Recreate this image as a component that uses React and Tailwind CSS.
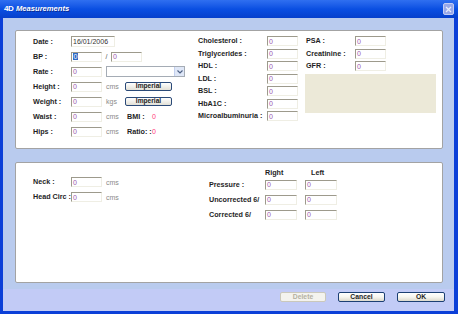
import React from "react";

// small XP-style form bits

function Box({ w = 31, h = 10, children, dark }) {
  return (
    <div
      className={`flex items-center bg-white border border-t-[#9d9a8c] border-l-[#9d9a8c] border-r-[#efeee4] border-b-[#efeee4] pl-[1px] text-[7px] leading-none overflow-hidden ${dark ? "text-[#333]" : "text-[#9a5ab0]"}`}
      style={{ width: w, height: h }}
    >
      {children ?? "0"}
    </div>
  );
}

function Lbl({ w, children, className = "" }) {
  return (
    <span
      className={`shrink-0 font-bold text-[7.2px] leading-none text-[#1e1e1e] whitespace-nowrap ${className}`}
      style={{ width: w }}
    >
      {children}
    </span>
  );
}

function Unit({ w, children }) {
  return (
    <span className="shrink-0 pl-[4px] text-[7px] leading-none text-[#8a8a8a]" style={{ width: w }}>
      {children}
    </span>
  );
}

function XpButton({ label, disabled, w }) {
  return (
    <div
      className={`h-[10px] flex items-center justify-center rounded-[2px] border text-[6.8px] font-bold leading-none ${
        disabled
          ? "border-[#cac8bb] bg-[#f4f3ee] text-[#b4b1a2]"
          : "border-[#1c3f73] bg-linear-to-b from-white via-[#f6f5f0] to-[#dcd9cc] text-[#1e1e1e]"
      }`}
      style={{ width: w }}
    >
      {label}
    </div>
  );
}

export default function App() {
  const labs = ["Cholesterol :", "Triglycerides :", "HDL :", "LDL :", "BSL :", "HbA1C :", "Microalbuminuria :"];

  return (
    <div className="w-[458px] h-[314px] flex flex-col overflow-hidden font-['Liberation_Sans',Arial,sans-serif] select-none">
      {/* title bar */}
      <div className="h-[18px] shrink-0 flex items-center bg-linear-to-b from-[#2f6ff0] via-[#0a4fe2] to-[#0640cc]">
        <span className="ml-[4px] w-[12px] text-[8px] font-bold leading-none text-white tracking-[-0.5px]">4D</span>
        <span className="text-[7.6px] font-bold italic leading-none text-white [text-shadow:1px_1px_0_#0a2a90]">Measurements</span>
        <div className="ml-auto mr-[4px] w-[11px] h-[12px] flex items-center justify-center rounded-[2px] border border-[#c4cdf3] bg-[#97a8e9]">
          <svg width="7" height="7" viewBox="0 0 7 7">
            <path d="M1 1L6 6M6 1L1 6" stroke="#e8ecfb" strokeWidth="1.3" />
          </svg>
        </div>
      </div>

      {/* window body */}
      <div className="flex-1 flex flex-col bg-[#b9cbee] border-l-[3px] border-r-[4px] border-b-[3px] border-[#0b3fd8]">
        <div className="pl-[12px] pt-[12px]">
          {/* top panel */}
          <div className="w-[428px] h-[119px] bg-white border border-[#a3a3a3] rounded-[2px] flex pt-[3px] pl-[17px]">
            {/* left column */}
            <div className="w-[165px] flex flex-col">
              <div className="h-[15px] flex items-center">
                <Lbl w={38}>Date :</Lbl>
                <Box w={44} h={11} dark>16/01/2006</Box>
              </div>
              <div className="h-[15px] flex items-center">
                <Lbl w={38}>BP :</Lbl>
                <Box>
                  <span className="bg-[#316ac5] text-white px-[0.5px]">0</span>
                </Box>
                <span className="w-[9px] text-center text-[7px] text-[#555] leading-none">/</span>
                <Box />
              </div>
              <div className="h-[15px] flex items-center">
                <Lbl w={38}>Rate :</Lbl>
                <Box />
                <div className="ml-[4px] w-[79px] h-[11px] flex justify-end bg-white border border-[#a5acb5]">
                  <div className="w-[10px] h-full flex items-center justify-center bg-[#dfe7f7] border-l border-[#c3d0ee]">
                    <svg width="6" height="4" viewBox="0 0 6 4">
                      <path d="M0.5 0.5L3 3L5.5 0.5" stroke="#4d6185" strokeWidth="1.2" fill="none" />
                    </svg>
                  </div>
                </div>
              </div>
              <div className="h-[15px] flex items-center">
                <Lbl w={38}>Height :</Lbl>
                <Box />
                <Unit w={23}>cms</Unit>
                <div className="w-[47px] h-[9px] flex items-center justify-center rounded-[2px] border border-[#2b4a78] bg-linear-to-b from-white to-[#e2e0d6] text-[6.6px] font-bold leading-none text-[#222]">
                  Imperial
                </div>
              </div>
              <div className="h-[15px] flex items-center">
                <Lbl w={38}>Weight :</Lbl>
                <Box />
                <Unit w={23}>kgs</Unit>
                <div className="w-[47px] h-[9px] flex items-center justify-center rounded-[2px] border border-[#2b4a78] bg-linear-to-b from-white to-[#e2e0d6] text-[6.6px] font-bold leading-none text-[#222]">
                  Imperial
                </div>
              </div>
              <div className="h-[15px] flex items-center">
                <Lbl w={38}>Waist :</Lbl>
                <Box />
                <Unit w={25}>cms</Unit>
                <Lbl w={25}>BMI :</Lbl>
                <span className="text-[7px] leading-none text-[#ff3b7a]">0</span>
              </div>
              <div className="h-[15px] flex items-center">
                <Lbl w={38}>Hips :</Lbl>
                <Box />
                <Unit w={25}>cms</Unit>
                <Lbl w={25}>Ratio: :</Lbl>
                <span className="text-[7px] leading-none text-[#ff3b7a]">0</span>
              </div>
            </div>

            {/* middle column */}
            <div className="w-[107px] flex flex-col mt-[0.75px]">
              {labs.map((l) => (
                <div key={l} className="h-[12.5px] flex items-center">
                  <Lbl w={69}>{l}</Lbl>
                  <Box />
                </div>
              ))}
            </div>

            {/* right column */}
            <div className="flex flex-col mt-[0.75px]">
              {["PSA :", "Creatinine :", "GFR :"].map((l) => (
                <div key={l} className="h-[12.5px] flex items-center">
                  <Lbl w={50} className="pl-[1px]">{l}</Lbl>
                  <Box />
                </div>
              ))}
              <div className="mt-[1.5px] w-[131px] h-[39px] bg-[#ece9d8]" />
            </div>
          </div>

          {/* bottom panel */}
          <div className="mt-[13px] w-[428px] h-[121px] bg-white border border-[#a3a3a3] rounded-[2px] flex items-start pl-[17px]">
            <div className="w-[176px] flex flex-col mt-[11.5px]">
              <div className="h-[15px] flex items-center">
                <Lbl w={38}>Neck :</Lbl>
                <Box />
                <Unit w={25}>cms</Unit>
              </div>
              <div className="h-[15px] flex items-center">
                <Lbl w={38}>Head Circ :</Lbl>
                <Box />
                <Unit w={25}>cms</Unit>
              </div>
            </div>
            <div className="flex flex-col mt-[5px]">
              <div className="h-[9px] flex items-center">
                <span className="w-[56px]" />
                <Lbl w={46}>Right</Lbl>
                <Lbl>Left</Lbl>
              </div>
              {["Pressure :", "Uncorrected 6/", "Corrected 6/"].map((l) => (
                <div key={l} className="h-[15px] flex items-center">
                  <Lbl w={56}>{l}</Lbl>
                  <Box w={32} />
                  <span className="w-[8px]" />
                  <Box w={32} />
                </div>
              ))}
            </div>
          </div>
        </div>

        {/* button strip */}
        <div className="mt-[6px] flex-1 bg-[#c2cbf6] pt-[3px] pr-[9px] flex justify-end gap-[12px]">
          <XpButton label="Delete" disabled w={46} />
          <XpButton label="Cancel" w={47} />
          <XpButton label="OK" w={48} />
        </div>
      </div>
    </div>
  );
}
